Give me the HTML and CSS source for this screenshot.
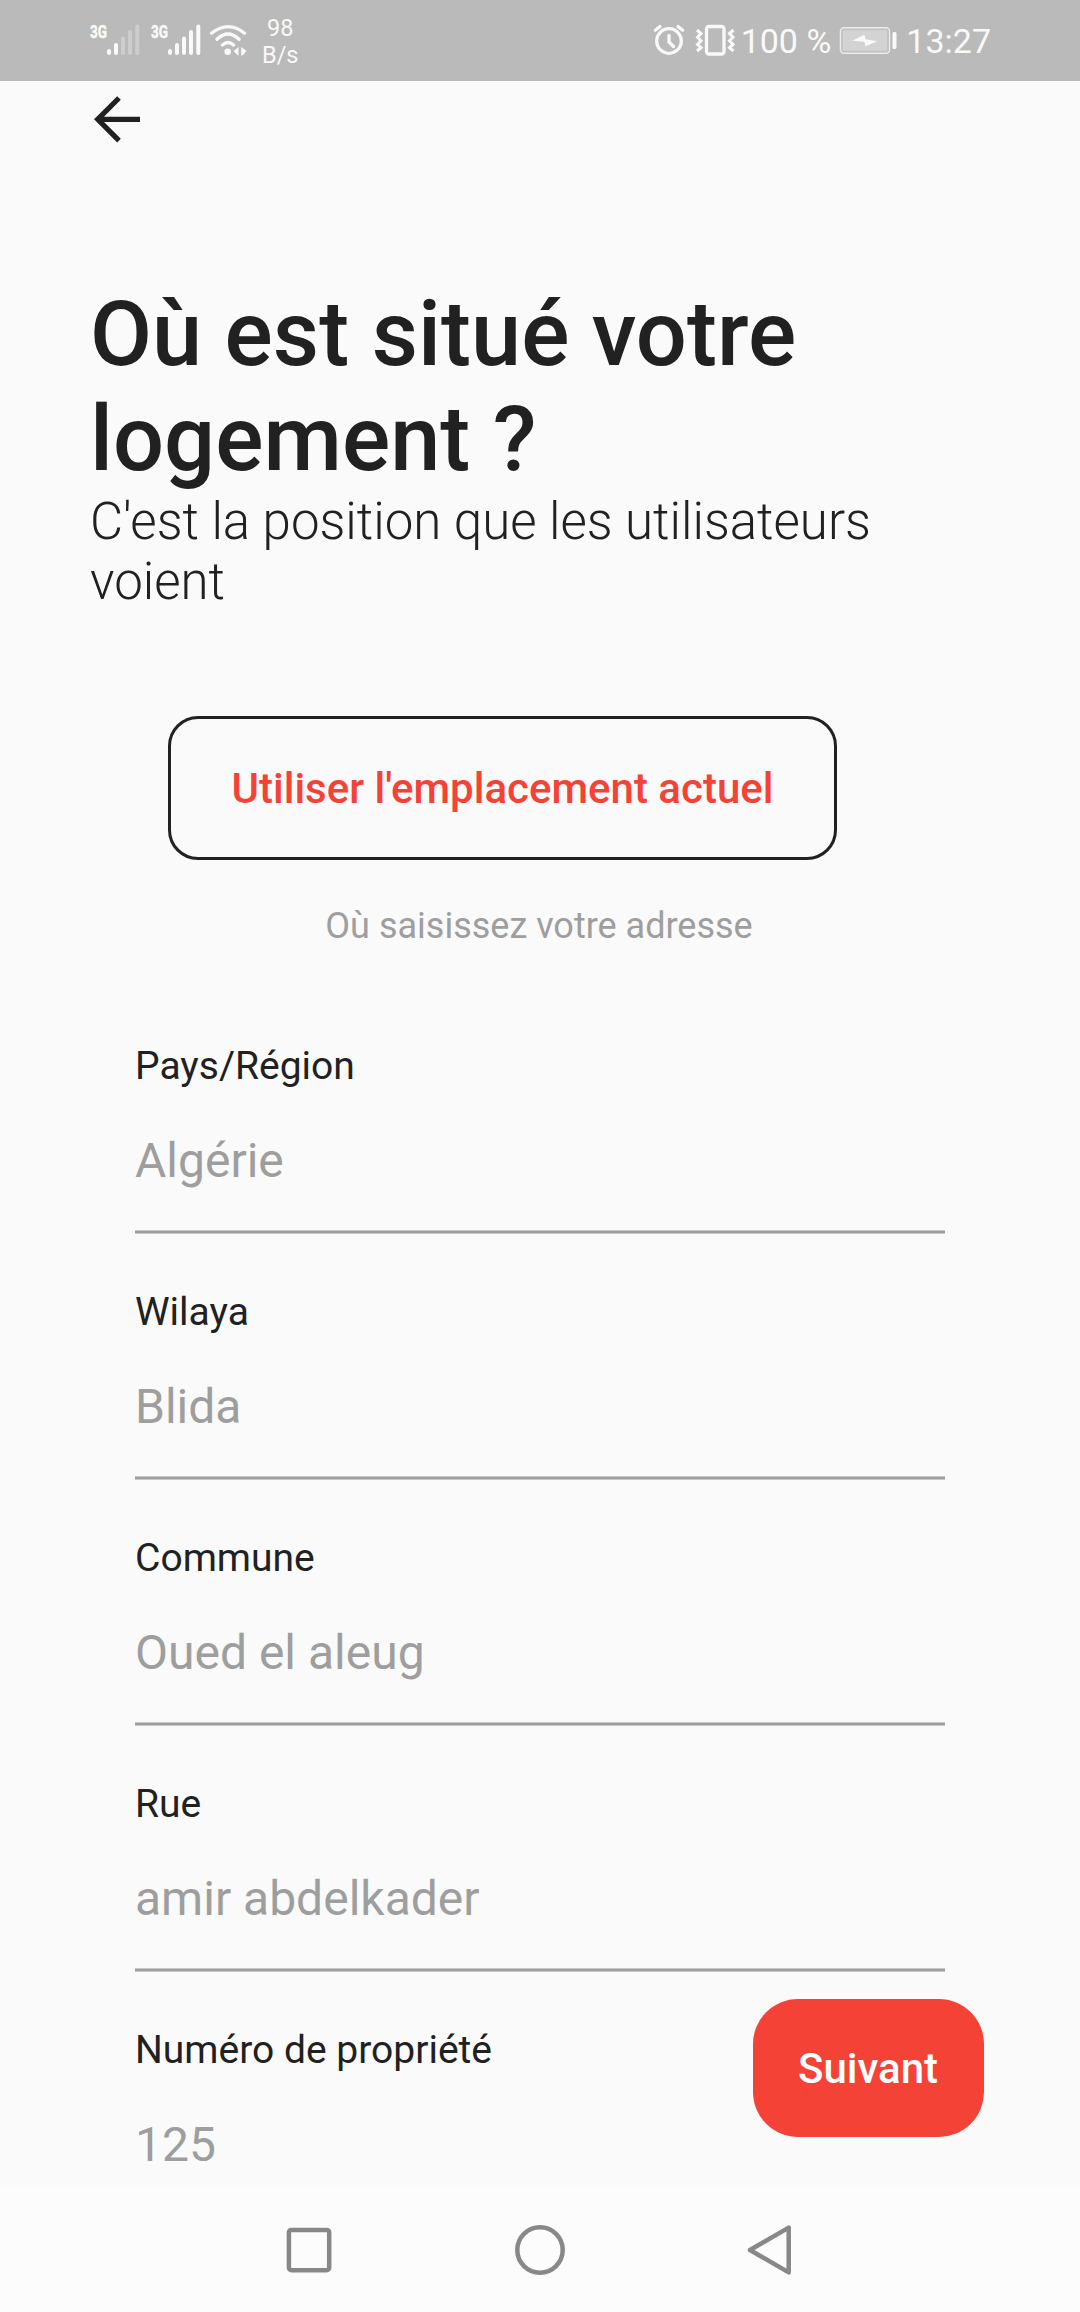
FILE: index.html
```html
<!DOCTYPE html>
<html lang="fr">
<head>
<meta charset="utf-8">
<title>Où est situé votre logement ?</title>
<link rel="stylesheet" href="styles.css">
</head>
<body>
<div class="screen">
  <header class="status">
    <div class="status-left">
      <svg class="signal" viewBox="0 0 50 40" aria-hidden="true">
        <text class="net" x="0" y="18.3" textLength="17" lengthAdjust="spacingAndGlyphs">3G</text>
        <g class="bars"><path d="M19 31v2M26 25v8"/><path class="off" d="M33 18.500v14.500M40 12v21M47.300 6.500v26.500"/></g>
      </svg>
      <svg class="signal" viewBox="0 0 50 40" aria-hidden="true">
        <text class="net" x="0" y="18.3" textLength="17" lengthAdjust="spacingAndGlyphs">3G</text>
        <g class="bars"><path d="M19 31v2M26 25v8M33 18.500v14.500M40 12v21M47.300 6.500v26.500"/></g>
      </svg>
      <svg class="wifi" viewBox="0 0 38 40" aria-hidden="true">
        <path class="line" d="M2.500 13.300Q19.500 0 35.500 13.300M8 19.300Q19 8.800 30 19.300M13.500 25Q19 20 24.500 25"/>
        <circle cx="18.700" cy="31.700" r="3.300"/>
        <path d="M24.500 31.300l5-4.200v8.600zM32.200 27.100l5.200 3.700-3 4-2.200 1z"/>
      </svg>
      <div class="rate"><span>98</span><span>B/s</span></div>
    </div>
    <div class="status-right">
      <svg class="alarm" viewBox="0 0 34 40" aria-hidden="true">
        <path class="line" d="M3.300 10.300L8 6.500M26 6.500l4.700 3.800"/>
        <circle class="line" cx="17" cy="21" r="12.300"/>
        <path class="line" d="M17 15.500v6.500l4.500 4.500"/>
      </svg>
      <svg class="vibrate" viewBox="0 0 42 40" aria-hidden="true">
        <rect class="line" x="11.500" y="6.500" width="17.500" height="27.500" rx="2.500"/>
        <path class="zig" d="M2 10l4 3.500-3.500 3.700 3.500 3.600-3.500 3.600 3.500 3.200-4 3.400M38.500 10l-4 3.500 3.500 3.700-3.500 3.600 3.500 3.600-3.500 3.200 4 3.400"/>
      </svg>
      <span class="status-text pct">100 %</span>
      <svg class="battery" viewBox="0 0 60 40" aria-hidden="true">
        <rect class="shell" x="1.500" y="7.700" width="49" height="25.500" rx="3.500"/>
        <rect class="charge" x="3.500" y="9.700" width="45" height="21.500" rx="1.500"/>
        <path d="M13.300 20.700l12-6 1.300 4.600 11.700 2-11.700 5-1.300-4.600z"/>
        <rect x="53.500" y="12" width="4" height="17" rx="1.500"/>
      </svg>
      <span class="status-text">13:27</span>
    </div>
  </header>

  <main class="content">
    <button class="back" aria-label="Retour">
      <svg viewBox="0 0 48 48" aria-hidden="true"><path d="M26 3L4.700 24.300 26 45.600M6 24.300h41"/></svg>
    </button>
    <h1 class="title">Où est situé votre logement ?</h1>
    <p class="subtitle">C'est la position que les utilisateurs voient</p>
    <button class="locate">Utiliser l'emplacement actuel</button>
    <p class="hint">Où saisissez votre adresse</p>
    <form class="form">
      <div class="field"><span class="label">Pays/Région</span><span class="value">Algérie</span></div>
      <div class="field"><span class="label">Wilaya</span><span class="value">Blida</span></div>
      <div class="field"><span class="label">Commune</span><span class="value">Oued el aleug</span></div>
      <div class="field"><span class="label">Rue</span><span class="value">amir abdelkader</span></div>
      <div class="field"><span class="label">Numéro de propriété</span><span class="value">125</span></div>
    </form>
    <button class="next">Suivant</button>
  </main>

  <nav class="navbar">
    <svg viewBox="0 0 54 54" aria-hidden="true"><rect x="6.900" y="6.900" width="40.300" height="40.300" rx="2.500"/></svg>
    <svg viewBox="0 0 54 54" aria-hidden="true"><circle cx="27" cy="27" r="22.700"/></svg>
    <svg viewBox="0 0 54 54" aria-hidden="true"><path d="M44.700 4.600v44.800L6 27z"/></svg>
  </nav>
</div>
</body>
</html>
```
FILE: styles.css
```css
*, *::after { box-sizing: border-box; }
body { margin: 0; font-family: Roboto, "Liberation Sans", sans-serif; color: #212121; }
h1, p { margin: 0; }
button { font-family: inherit; border: 0; background: none; padding: 0; margin: 0; }
svg { display: block; flex: none; }

.screen { width: 1080px; height: 2312px; display: flex; flex-direction: column; background: #fafafa; overflow: hidden; }

.status { flex: none; height: 81px; background: #bababa; color: #f9f9f9; display: flex; justify-content: space-between; padding: 0 89px 0 90px; }
.status svg { fill: #f9f9f9; height: 40px; margin-top: 20px; }
.status .line { fill: none; stroke: #f9f9f9; stroke-width: 3.300; stroke-linecap: round; }
.status-left, .status-right { display: flex; }
.signal { width: 50px; margin-right: 11px; }
.net { font-size: 19px; font-weight: 700; stroke: #f9f9f9; stroke-width: 0.500; }
.bars { stroke: #f9f9f9; stroke-width: 4; stroke-linecap: round; }
.bars .off { stroke: #cdcdcd; }
.wifi { width: 38px; margin-left: -3px; }
.rate { display: flex; flex-direction: column; align-items: center; font-size: 23.5px; line-height: 27px; margin: 15px 0 0 15px; }
.alarm { width: 34px; }
.vibrate { width: 42px; margin-left: 9px; }
.vibrate .zig { fill: none; stroke: #f9f9f9; stroke-width: 3; }
.status-text { font-size: 34px; line-height: 40px; margin-top: 21px; white-space: nowrap; }
.pct { margin-left: 4px; }
.battery { width: 60px; margin: 0 7px 0 8px; }
.battery .shell { fill: none; stroke: #ececec; stroke-width: 1.500; }
.battery .charge { fill: #d3d3d3; stroke: #c4c4c4; stroke-width: 1; }

.content { position: relative; flex: 1; min-height: 0; overflow: hidden; padding: 14px 90px 0; display: flex; flex-direction: column; align-items: flex-start; }
.content > * { flex: none; }
.back { width: 48px; height: 48px; margin-left: 3px; }
.back svg { width: 48px; height: 48px; fill: none; stroke: #212121; stroke-width: 5.200; }
.title { margin-top: 139px; font-size: 90px; font-weight: 500; line-height: 105px; letter-spacing: 0.050px; width: 800px; }
.subtitle { font-size: 51px; font-weight: 300; line-height: 60px; width: 800px; }
.locate { width: 669px; height: 144px; margin: 104px 0 0 78px; border: 3px solid #212121; border-radius: 30px; color: #f44336; font-size: 42px; font-weight: 500; line-height: 49px; }
.hint { align-self: stretch; text-align: center; margin: 45px 2px 0 0; font-size: 36px; line-height: 42px; color: #9e9e9e; }
.form { align-self: stretch; margin: 96px 45px 0; display: flex; flex-direction: column; gap: 55px; }
.field { height: 191px; display: flex; flex-direction: column; }
/* Soft-edged underline: 2px solid core with a lighter pixel on each side */
.field::after { content: ""; height: 4px; margin-top: auto; background: #9e9e9e; border: solid #c8c8c8; border-width: 1px 0; }
.label { font-size: 39px; line-height: 46px; }
.value { margin-top: 44px; font-size: 48px; line-height: 56px; color: #9e9e9e; }
.next { position: absolute; right: 96px; bottom: 51px; width: 231px; height: 138px; padding-right: 1px; border-radius: 45px; background: #f44336; color: #fff; font-size: 42px; font-weight: 500; line-height: 49px; }

.navbar { flex: none; height: 124px; background: #fcfcfc; display: flex; justify-content: center; align-items: center; gap: 177px; }
.navbar svg { width: 54px; height: 54px; fill: none; stroke: #888; stroke-width: 4.500; stroke-linejoin: round; }
```
